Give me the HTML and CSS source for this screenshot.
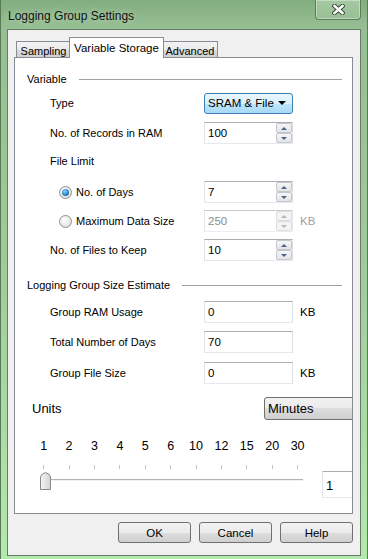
FILE: index.html
```html
<!DOCTYPE html>
<html lang="en">
<head>
    <meta charset="UTF-8">
    <title>Logging Group Settings</title>
    <link rel="stylesheet" href="styles.css">
</head>
<body>
    <div class="window">
        <div class="titlebar">
            <span class="title">Logging Group Settings</span>
            <div class="close">
                <svg width="13" height="11" viewBox="0 0 13 11">
                    <path d="M2.5 2 L10.5 9 M10.5 2 L2.5 9" stroke="#3d4a3c" stroke-width="4.5" stroke-linecap="square"/>
                    <path d="M2.5 2 L10.5 9 M10.5 2 L2.5 9" stroke="#ffffff" stroke-width="2.5" stroke-linecap="square"/>
                </svg>
            </div>
        </div>
        <div class="client">
            <div class="tabs">
                <div class="tab tab-sampling">Sampling</div>
                <div class="tab active">Variable Storage</div>
                <div class="tab tab-advanced">Advanced</div>
            </div>
            <div class="panel">
                <div class="group-head">Variable</div>

                <div class="row gap6">
                    <span>Type</span>
                    <div class="combo">SRAM &amp; File<span class="caret"></span></div>
                </div>
                <div class="row gap8">
                    <span>No. of Records in RAM</span>
                    <div class="spin">
                        <span class="val">100</span>
                        <span class="arrows"><span class="up"></span><span class="down"></span></span>
                    </div>
                </div>
                <div class="row gap6">
                    <span>File Limit</span>
                </div>
                <div class="row gap9">
                    <label class="option"><span class="radio checked"></span>No. of Days</label>
                    <div class="spin">
                        <span class="val">7</span>
                        <span class="arrows"><span class="up"></span><span class="down"></span></span>
                    </div>
                </div>
                <div class="row gap7">
                    <label class="option"><span class="radio"></span>Maximum Data Size</label>
                    <div class="spin disabled">
                        <span class="val">250</span>
                        <span class="arrows"><span class="up"></span><span class="down"></span></span>
                    </div>
                    <span class="unit muted">KB</span>
                </div>
                <div class="row gap7">
                    <span>No. of Files to Keep</span>
                    <div class="spin">
                        <span class="val">10</span>
                        <span class="arrows"><span class="up"></span><span class="down"></span></span>
                    </div>
                </div>

                <div class="group-head gap17">Logging Group Size Estimate</div>

                <div class="row gap9">
                    <span>Group RAM Usage</span>
                    <div class="field">0</div>
                    <span class="unit">KB</span>
                </div>
                <div class="row gap8">
                    <span>Total Number of Days</span>
                    <div class="field">70</div>
                </div>
                <div class="row gap9">
                    <span>Group File Size</span>
                    <div class="field">0</div>
                    <span class="unit">KB</span>
                </div>

                <div class="units-row">
                    <span>Units</span>
                    <div class="units-combo">Minutes</div>
                </div>

                <div class="scale">
                    <span>1</span><span>2</span><span>3</span><span>4</span><span>5</span><span>6</span>
                    <span>10</span><span>12</span><span>15</span><span>20</span><span>30</span>
                </div>
                <div class="ticks">
                    <i></i><i></i><i></i><i></i><i></i><i></i><i></i><i></i><i></i><i></i><i></i>
                </div>
                <div class="slider-row">
                    <div class="slider">
                        <div class="track"></div>
                        <svg class="thumb" width="11" height="18" viewBox="0 0 11 18">
                            <defs>
                                <linearGradient id="tg" x1="0" y1="0" x2="1" y2="0">
                                    <stop offset="0" stop-color="#f4f4f4"/>
                                    <stop offset="1" stop-color="#d4d4d4"/>
                                </linearGradient>
                            </defs>
                            <path d="M0.5 5 Q0.5 2 5.5 0.5 Q10.5 2 10.5 5 L10.5 17.5 L0.5 17.5 Z" fill="url(#tg)" stroke="#8a8a8a"/>
                        </svg>
                    </div>
                    <div class="slider-value">1</div>
                </div>
            </div>
            <div class="actions">
                <button>OK</button>
                <button>Cancel</button>
                <button>Help</button>
            </div>
        </div>
    </div>
</body>
</html>
```

FILE: styles.css
```css
* {
    box-sizing: border-box;
}
body {
    margin: 0;
    width: 368px;
    height: 559px;
    overflow: hidden;
    font-family: "Liberation Sans", Arial, sans-serif;
    font-size: 11px;
    color: #000;
}
.window {
    height: 559px;
    padding: 0 6px;
    border-left: 1px solid #587a55;
    border-right: 1px solid #587a55;
    background: linear-gradient(#82ad7f 0, #96bf93 28px, #9fca9b 260px, #b4e9ad 559px);
}
.titlebar {
    height: 29px;
    display: flex;
}
.title {
    margin: 9px 0 0 1px;
    font-size: 12px;
    color: #111;
    text-shadow: 0 0 6px rgba(255, 255, 255, 0.5);
}
.close {
    margin-left: auto;
    width: 46px;
    height: 20px;
    display: flex;
    align-items: center;
    justify-content: center;
    border: 1px solid #5e7d5b;
    border-top: none;
    border-radius: 0 0 4px 4px;
    background: linear-gradient(#a5c9a1, #98bf95);
    box-shadow: inset 0 0 0 1px rgba(255, 255, 255, 0.35);
}
.client {
    height: 527px;
    border: 1px solid #6a7a69;
    background: #f0f0f0;
    padding: 7px 7px 0 6px;
}
.tabs {
    display: flex;
    align-items: flex-end;
    height: 20px;
    margin-left: 2px;
    position: relative;
    z-index: 1;
}
.tab {
    height: 16px;
    border: 1px solid #898c95;
    border-bottom: none;
    background: linear-gradient(#f3f3f3, #ebebeb 50%, #dddddd 50%, #cfcfcf);
    display: flex;
    align-items: center;
    justify-content: center;
    padding-top: 2px;
}
.tab-sampling {
    width: 55px;
}
.tab.active {
    width: 95px;
    height: 21px;
    margin: 0 -2px -1px -2px;
    background: #fff;
    padding-top: 0;
    padding-bottom: 1px;
    font-size: 11.5px;
    position: relative;
    z-index: 2;
}
.tab-advanced {
    width: 56px;
}
.panel {
    height: 457px;
    border: 1px solid #898c95;
    background: #fff;
    padding: 14px 10px 0 12px;
    overflow: hidden;
}
.group-head {
    display: flex;
    align-items: center;
    height: 14px;
}
.group-head::after {
    content: "";
    flex: 1;
    margin-left: 12px;
    border-top: 1px solid #a0a0a0;
}
.row {
    display: grid;
    grid-template-columns: 154px 89px auto;
    align-items: center;
    height: 22px;
    margin-left: 23px;
}
.gap6 { margin-top: 6px; }
.gap7 { margin-top: 7px; }
.gap8 { margin-top: 8px; }
.gap9 { margin-top: 9px; }
.gap17 { margin-top: 17px; }
.unit {
    margin-left: 7px;
    font-size: 11.5px;
}
.muted {
    color: #a0a0a0;
}
.option {
    display: flex;
    align-items: center;
    padding-left: 9px;
}
.radio {
    width: 13px;
    height: 13px;
    margin-right: 4px;
    border: 1px solid #8e8f8f;
    border-radius: 50%;
    background: radial-gradient(circle at 40% 35%, #ffffff, #d6d6d6);
    display: flex;
    align-items: center;
    justify-content: center;
}
.radio.checked::after {
    content: "";
    width: 7px;
    height: 7px;
    border-radius: 50%;
    background: radial-gradient(circle at 40% 35%, #8fd3ff, #2a86c8 55%, #0d4e84);
}
.combo {
    height: 21px;
    border: 1px solid #3c7fb1;
    border-radius: 3px;
    background: linear-gradient(#eaf6fd, #d9f0fc 50%, #bee6fd 50%, #a7d9f5);
    display: flex;
    align-items: center;
    padding: 0 6px 0 3px;
    font-size: 11.5px;
}
.caret {
    margin-left: auto;
    border-left: 4px solid transparent;
    border-right: 4px solid transparent;
    border-top: 4px solid #000;
}
.spin,
.field {
    height: 22px;
    border: 1px solid #abadb3;
    border-color: #abadb3 #dbdfe6 #e3e9ef #e2e3ea;
    background: #fff;
    display: flex;
    align-items: center;
    padding-left: 3px;
    font-size: 11.5px;
}
.arrows {
    margin-left: auto;
    width: 16px;
    height: 20px;
    display: flex;
    flex-direction: column;
}
.arrows span {
    flex: 1;
    border: 1px solid #c3c6cc;
    border-radius: 2px;
    background: linear-gradient(#f6f6f6, #e4e4e4);
    display: flex;
    align-items: center;
    justify-content: center;
}
.arrows .up::after {
    content: "";
    border-left: 3px solid transparent;
    border-right: 3px solid transparent;
    border-bottom: 3px solid #4d6185;
}
.arrows .down::after {
    content: "";
    border-left: 3px solid transparent;
    border-right: 3px solid transparent;
    border-top: 3px solid #4d6185;
}
.spin.disabled {
    border-color: #c9cbcf #e5e7ea #eceef1 #e5e7ea;
    color: #8a8a8a;
}
.spin.disabled .arrows span {
    border-color: #dcdde0;
    background: #f4f4f4;
}
.spin.disabled .arrows span::after {
    border-top-color: #b8b8b8;
    border-bottom-color: #b8b8b8;
}
.units-row {
    display: grid;
    grid-template-columns: 232px 110px;
    align-items: center;
    margin: 13px 0 0 5px;
    font-size: 13px;
}
.units-combo {
    height: 23px;
    border: 1px solid #707070;
    border-radius: 3px;
    background: linear-gradient(#f2f2f2, #ebebeb 50%, #dddddd 50%, #cfcfcf);
    display: flex;
    align-items: center;
    padding-left: 3px;
}
.scale,
.ticks {
    display: grid;
    grid-template-columns: repeat(11, 25.4px);
    margin-left: 4px;
    text-align: center;
}
.scale {
    height: 14px;
    margin-top: 19px;
    font-size: 12.5px;
    line-height: 14px;
}
.ticks {
    height: 4px;
    margin-top: 12px;
}
.ticks i {
    display: block;
    width: 1px;
    height: 4px;
    margin: 0 auto;
    background: #c4c4c4;
}
.slider-row {
    display: flex;
    margin: 2px 0 0 13px;
    height: 27px;
}
.slider {
    position: relative;
    width: 263px;
    flex-shrink: 0;
}
.track {
    margin-top: 8px;
    height: 2px;
    border-top: 1px solid #b4b4b4;
    border-bottom: 1px solid #f0f0f0;
}
.thumb {
    position: absolute;
    left: 0;
    top: 1px;
}
.slider-value {
    width: 40px;
    flex-shrink: 0;
    margin-left: 19px;
    height: 27px;
    border: 1px solid #abadb3;
    border-color: #abadb3 #dbdfe6 #e3e9ef #e2e3ea;
    padding: 6px 0 0 3px;
    font-size: 13px;
}
.actions {
    display: flex;
    justify-content: flex-end;
    gap: 8px;
    margin-top: 8px;
}
button {
    width: 73px;
    height: 21px;
    border: 1px solid #707070;
    border-radius: 3px;
    background: linear-gradient(#f2f2f2, #ebebeb 50%, #dddddd 50%, #cfcfcf);
    font-family: "Liberation Sans", Arial, sans-serif;
    font-size: 11.5px;
    color: #000;
    padding: 0;
}
```
